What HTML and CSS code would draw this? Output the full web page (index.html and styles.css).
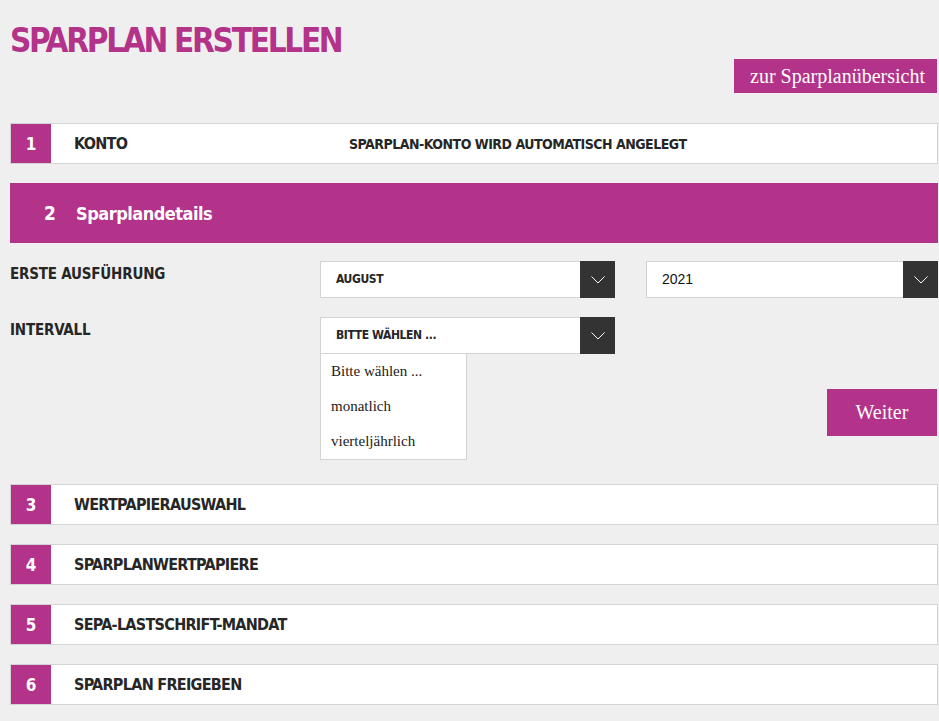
FILE: index.html
```html
<!DOCTYPE html>
<html lang="de">
<head>
    <meta charset="UTF-8">
    <meta name="viewport" content="width=device-width, initial-scale=1.0">
    <title>Sparplan erstellen</title>
    <link rel="stylesheet" href="styles.css">
</head>
<body>
    <div class="page">
        <h1>Sparplan erstellen</h1>
        <div class="top-actions">
            <a class="btn-link" href="#">zur Sparplanübersicht</a>
        </div>

        <div class="step">
            <span class="step-num">1</span>
            <span class="step-title">Konto</span>
            <span class="step-info">Sparplan-Konto wird automatisch angelegt</span>
        </div>

        <div class="step-open">
            <div class="step-head">
                <span class="head-num">2</span>
                <span class="head-title">Sparplandetails</span>
            </div>
            <div class="form">
                <div class="form-row">
                    <label class="form-label">Erste Ausführung</label>
                    <div class="select">
                        <span class="select-value">August</span>
                        <span class="select-arrow"><svg width="14" height="8" viewBox="0 0 14 8"><polyline points="0.5,0.5 7,7 13.5,0.5" fill="none" stroke="#fff" stroke-width="1"/></svg></span>
                    </div>
                    <div class="select second">
                        <span class="select-value plain">2021</span>
                        <span class="select-arrow"><svg width="14" height="8" viewBox="0 0 14 8"><polyline points="0.5,0.5 7,7 13.5,0.5" fill="none" stroke="#fff" stroke-width="1"/></svg></span>
                    </div>
                </div>
                <div class="form-row">
                    <label class="form-label">Intervall</label>
                    <div class="select open">
                        <span class="select-value">Bitte wählen ...</span>
                        <span class="select-arrow"><svg width="14" height="8" viewBox="0 0 14 8"><polyline points="0.5,0.5 7,7 13.5,0.5" fill="none" stroke="#fff" stroke-width="1"/></svg></span>
                        <ul class="options">
                            <li>Bitte wählen ...</li>
                            <li>monatlich</li>
                            <li>vierteljährlich</li>
                        </ul>
                    </div>
                </div>
                <div class="form-actions">
                    <button class="btn">Weiter</button>
                </div>
            </div>
        </div>

        <div class="step">
            <span class="step-num">3</span>
            <span class="step-title">Wertpapierauswahl</span>
        </div>
        <div class="step">
            <span class="step-num">4</span>
            <span class="step-title">Sparplanwertpapiere</span>
        </div>
        <div class="step">
            <span class="step-num">5</span>
            <span class="step-title">SEPA-Lastschrift-Mandat</span>
        </div>
        <div class="step">
            <span class="step-num">6</span>
            <span class="step-title">Sparplan freigeben</span>
        </div>
    </div>
</body>
</html>
```

FILE: styles.css
```css
body {
    margin: 0;
    background-color: #efefef;
    color: #262626;
    font-family: "DejaVu Sans Condensed", "Liberation Sans", sans-serif;
}
.page {
    padding: 0 1px 0 10px;
}
h1 {
    margin: 0;
    padding-top: 23px;
    font-size: 33px;
    line-height: 35px;
    letter-spacing: -2.3px;
    font-weight: bold;
    text-transform: uppercase;
    color: #b3328a;
}
.top-actions {
    display: flex;
    justify-content: flex-end;
    margin-top: 1px;
    margin-right: 1px;
}
.btn-link, .btn {
    display: inline-block;
    background-color: #b3328a;
    color: #fff;
    font-family: "Liberation Serif", serif;
    text-decoration: none;
    border: none;
}
.btn-link {
    height: 34px;
    line-height: 34px;
    padding: 0 12px 0 16px;
    font-size: 20px;
}
.step {
    display: flex;
    align-items: center;
    height: 39px;
    margin-top: 19px;
    border: 1px solid #d3d3d3;
    background-color: #fff;
    text-transform: uppercase;
    font-weight: bold;
    font-size: 16px;
    letter-spacing: -0.7px;
}
.top-actions + .step {
    margin-top: 30px;
}
.step-open + .step {
    margin-top: 48px;
}
.step-num {
    width: 40px;
    height: 100%;
    display: flex;
    align-items: center;
    justify-content: center;
    background-color: #b3328a;
    color: #fff;
    font-size: 17px;
    letter-spacing: 0;
}
.step-title {
    margin-left: 23px;
    width: 275px;
}
.step-info {
    font-size: 14px;
    letter-spacing: -0.5px;
}
.step-open {
    margin-top: 19px;
}
.step-head {
    display: flex;
    align-items: center;
    height: 60px;
    background-color: #b3328a;
    color: #fff;
    font-weight: bold;
    font-size: 18px;
    letter-spacing: -0.5px;
}
.head-num {
    margin-left: 34px;
    width: 32px;
    font-size: 19px;
}
.form {
    padding-top: 18px;
}
.form-row {
    display: grid;
    grid-template-columns: 310px 295px 1fr;
    margin-bottom: 19px;
}
.form-label {
    padding-top: 4px;
    font-size: 15px;
    letter-spacing: -0.2px;
    font-weight: bold;
    text-transform: uppercase;
}
.select {
    position: relative;
    display: flex;
    height: 35px;
    border: 1px solid #d3d3d3;
    background-color: #fff;
}
.select.second {
    margin-left: 31px;
}
.select-value {
    flex: 1;
    padding-left: 15px;
    line-height: 35px;
    font-size: 12px;
    letter-spacing: -0.4px;
    font-weight: bold;
    text-transform: uppercase;
}
.select-value.plain {
    font-weight: normal;
    font-family: "Liberation Sans", sans-serif;
    font-size: 14px;
    letter-spacing: 0;
    color: #111;
}
.select-arrow {
    width: 35px;
    display: flex;
    align-items: center;
    justify-content: center;
    background-color: #333;
    margin: -1px -1px -1px 0;
}
.options {
    position: absolute;
    top: 35px;
    left: -1px;
    width: 145px;
    margin: 0;
    padding: 0;
    list-style: none;
    background-color: #fff;
    border: 1px solid #d3d3d3;
    font-family: "Liberation Serif", serif;
    font-size: 15px;
    color: #1a1a1a;
    z-index: 2;
}
.options li {
    height: 35px;
    line-height: 35px;
    padding-left: 10px;
}
.form-actions {
    display: flex;
    justify-content: flex-end;
    margin-top: 35px;
    margin-right: 1px;
}
.btn {
    width: 110px;
    height: 47px;
    font-size: 20px;
    cursor: pointer;
}
```
